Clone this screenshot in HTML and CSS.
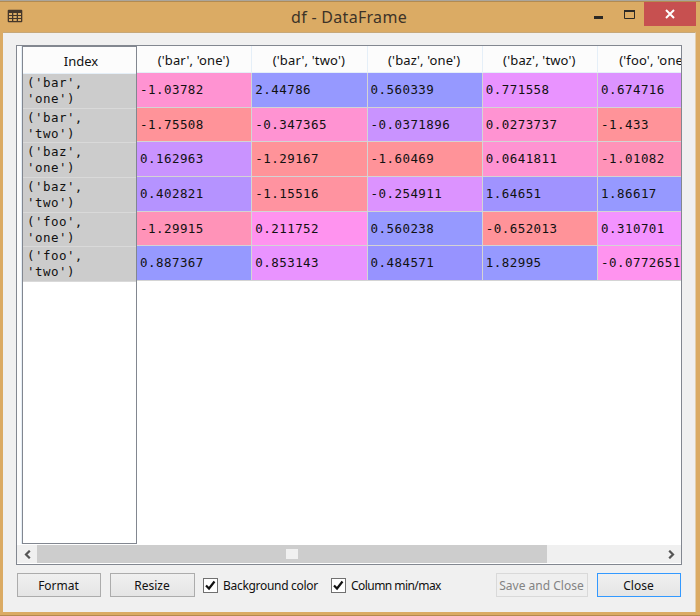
FILE: index.html
```
<!DOCTYPE html>
<html lang="en">
<head>
<meta charset="utf-8">
<title>df - DataFrame</title>
<link rel="stylesheet" href="styles.css">
</head>
<body>
<div class="window">
  <header class="titlebar">
    <svg class="app-icon" width="16" height="14" viewBox="0 0 16 14"><rect x=".7" y=".7" width="14.600" height="12.600" rx="1" fill="#45372a"/><path d="M2 4h3v2H2zM6.300 4h3.400v2H6.300zM11 4h3v2h-3zM2 7h3v2H2zM6.300 7h3.400v2H6.300zM11 7h3v2h-3zM2 10h3v2H2zM6.300 10h3.400v2H6.300zM11 10h3v2h-3z" fill="#dbab64"/></svg>
    <h1 class="title"><span>df - DataFrame</span></h1>
    <div class="controls">
      <svg class="minmax" width="46" height="14" viewBox="0 0 46 14"><path d="M1 8h9v3H1z" fill="#2c2925"/><path d="M31.500 2.500h10v8h-10z" fill="none" stroke="#2c2925"/><path d="M31 2h11v2H31z" fill="#2c2925"/></svg>
      <div class="close-x"><svg width="10" height="10" viewBox="0 0 10 10"><path d="M1 1l8 8M9 1l-8 8" stroke="#fff" stroke-width="2"/></svg></div>
    </div>
  </header>
  <main class="client">
    <section class="table-view">
      <div class="panes">
        <div class="gutter"></div>
        <div class="index">
          <div class="head">Index</div>
          <div class="key">('bar',<br>'one')</div>
          <div class="key">('bar',<br>'two')</div>
          <div class="key">('baz',<br>'one')</div>
          <div class="key">('baz',<br>'two')</div>
          <div class="key">('foo',<br>'one')</div>
          <div class="key">('foo',<br>'two')</div>
        </div>
        <div class="data">
          <div class="col-head">('bar', 'one')</div><div class="col-head">('bar', 'two')</div><div class="col-head">('baz', 'one')</div><div class="col-head">('baz', 'two')</div><div class="col-head">('foo', 'one')</div>
          <div class="cell pink">-1.03782</div><div class="cell blue">2.44786</div><div class="cell blue">0.560339</div><div class="cell orchid">0.771558</div><div class="cell mauve">0.674716</div>
          <div class="cell red">-1.75508</div><div class="cell pink">-0.347365</div><div class="cell violet">-0.0371896</div><div class="cell pink">0.0273737</div><div class="cell red">-1.433</div>
          <div class="cell violet">0.162963</div><div class="cell red">-1.29167</div><div class="cell red">-1.60469</div><div class="cell pink">0.0641811</div><div class="cell rose">-1.01082</div>
          <div class="cell lavender">0.402821</div><div class="cell coral">-1.15516</div><div class="cell mauve">-0.254911</div><div class="cell indigo">1.64651</div><div class="cell blue">1.86617</div>
          <div class="cell rose">-1.29915</div><div class="cell magenta">0.211752</div><div class="cell blue">0.560238</div><div class="cell red">-0.652013</div><div class="cell fuchsia">0.310701</div>
          <div class="cell blue">0.887367</div><div class="cell orchid">0.853143</div><div class="cell periwinkle">0.484571</div><div class="cell blue">1.82995</div><div class="cell magenta">-0.0772651</div>
        </div>
      </div>
      <div class="scrollbar">
        <div class="arrow"><svg width="7" height="9" viewBox="0 0 7 9"><path d="M5.800 .7L2 4.500l3.800 3.800" fill="none" stroke="#555" stroke-width="2.200"/></svg></div>
        <div class="thumb"><i class="grip"></i></div>
        <div class="arrow right"><svg width="7" height="9" viewBox="0 0 7 9"><path d="M1.200 .7L5 4.500 1.200 8.300" fill="none" stroke="#555" stroke-width="2.200"/></svg></div>
      </div>
    </section>
    <footer class="actions">
      <div class="button format">Format</div>
      <div class="button resize">Resize</div>
      <div class="check bg"><span class="box"><svg width="11" height="11" viewBox="0 0 11 11"><path d="M1 5.500l3 3L9.500 1.500" fill="none" stroke="#111" stroke-width="2.200"/></svg></span><span>Background color</span></div>
      <div class="check minmax-check"><span class="box"><svg width="11" height="11" viewBox="0 0 11 11"><path d="M1 5.500l3 3L9.500 1.500" fill="none" stroke="#111" stroke-width="2.200"/></svg></span><span>Column min/max</span></div>
      <div class="button save">Save and Close</div>
      <div class="button close">Close</div>
    </footer>
  </main>
</div>
</body>
</html>
```
FILE: styles.css
```
* { box-sizing: border-box; }
body { margin: 0; font-family: "Noto Sans", sans-serif; color: #111; }
.window {
  width: 700px; height: 616px; overflow: hidden;
  background: #dbab64;
  border-top: 1px solid #aaa59c;
  border-bottom: 1px solid #b58a4e;
  padding: 0 4px 3px 3px;
}
.titlebar { display: flex; height: 31px; box-shadow: inset 0 1px 0 #b28b52; margin: 0 -4px 0 -3px; }
.app-icon { margin: 8px 0 0 7px; flex: none; }
.title { flex: 1; margin: 0 0 0 268px; font-size: 16px; line-height: 32px; font-weight: 400; color: #3d3328; white-space: nowrap; letter-spacing: .3px; }
.controls { display: flex; }
.minmax { margin: 7px 5px 0 0; }
.close-x { width: 52px; height: 24px; margin: 1px 4px 0 0; background: #c75050; display: flex; align-items: center; justify-content: center; }
.client { height: 580px; background: #f0f0f0; border: 1px solid #c3a577; border-width: 1px 1px 0 0; border-right-color: #e3cfae; border-top-color: #c7a878; padding: 12px 12px 0 13px; }
.table-view { width: 666px; height: 520px; border: 1px solid #828790; background: #fff; overflow: hidden; }
.panes { display: flex; height: 498px; margin-bottom: 1px; }
.gutter { width: 5px; flex: none; background: #fdfdfd; border-right: 1px solid #e4edf5; }
.index { width: 115px; flex: none; border: 1px solid #828790; background: #fff; }
.head { height: 27px; line-height: 28px; font-size: 13px; text-align: center; background: #fcfcfc; border-bottom: 1px solid #e5eff8; padding-left: 3px; }
.key { height: 34.7px; background: #ccc; border-bottom: 1px solid #d9d9d9; padding: 1px 0 0 4px; line-height: 16px; font-family: "DejaVu Sans Mono", monospace; font-size: 12.500px; letter-spacing: .45px; }
.data { display: grid; grid-template-columns: repeat(5, 115.250px); grid-template-rows: 27px repeat(6, 34.700px); align-content: start; flex: 1; overflow: hidden; }
.col-head { height: 27px; line-height: 28px; text-align: center; font-size: 13px; letter-spacing: .15px; padding-right: 1px; background: #fcfcfc; border-right: 1px solid #e5eff8; white-space: nowrap; border-bottom: 1px solid #e5eff8; }
.cell { border: solid #d4d4d4; border-width: 0 1px 1px 0; padding-left: 3px; line-height: 33px; font-family: "DejaVu Sans Mono", monospace; font-size: 12.500px; letter-spacing: .45px; white-space: nowrap; }
.pink { background: #ff93d2; }
.blue { background: #9699ff; }
.periwinkle { background: #9793ff; }
.indigo { background: #a093ff; }
.orchid { background: #e993ff; }
.mauve { background: #dc93ff; }
.violet { background: #c993ff; }
.lavender { background: #b593ff; }
.red { background: #ff9399; }
.coral { background: #ff93a0; }
.rose { background: #ff93b8; }
.magenta { background: #ff93ef; }
.fuchsia { background: #f393ff; }
.scrollbar { display: flex; height: 18px; background: #f0f0f0; }
.arrow { width: 20px; display: flex; align-items: center; justify-content: center; flex: none; }
.thumb { width: 510px; background: #cdcdcd; display: flex; align-items: center; padding-left: 249px; }
.grip { width: 12px; height: 10px; background: #f0f0f0; }
.right { margin-left: auto; }
.actions { display: flex; align-items: center; margin-top: 8px; height: 24px; font-size: 12px; white-space: nowrap; }
.button { height: 24px; line-height: 23px; border: 1px solid #acacac; background: linear-gradient(#f0f0f0, #e5e5e5); text-align: center; padding-right: 1px; }
.format { width: 84px; margin-left: 1px; }
.resize { width: 85px; margin-left: 9px; }
.check { display: flex; align-items: center; gap: 5px; }
.bg { margin-left: 8px; width: 128px; letter-spacing: -.3px; }
.minmax-check { letter-spacing: -.55px; }
.box { width: 15px; height: 15px; border: 1px solid #707070; background: #fff; display: flex; align-items: center; justify-content: center; flex: none; }
.save { width: 92px; margin-left: auto; margin-right: 9px; color: #838383; border-color: #d9d9d9; background: #efefef; }
.close { width: 84px; border-color: #3399ff; margin-right: 2px; }
```
